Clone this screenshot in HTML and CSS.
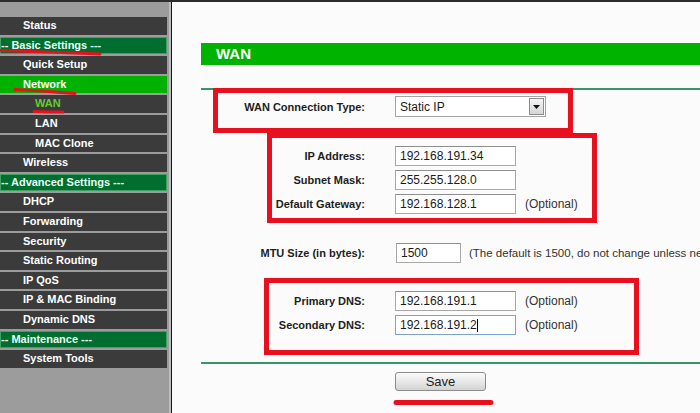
FILE: index.html
```html
<!DOCTYPE html>
<html lang="en">
<head>
    <meta charset="UTF-8">
    <title>WAN</title>
    <link rel="stylesheet" href="styles.css">
</head>
<body>
    <div class="frame">
        <nav class="menu">
            <a class="item">Status</a>
            <div class="section">-- Basic Settings ---</div>
            <a class="item">Quick Setup</a>
            <a class="item active">Network</a>
            <a class="item sub current">WAN</a>
            <a class="item sub">LAN</a>
            <a class="item sub">MAC Clone</a>
            <a class="item">Wireless</a>
            <div class="section">-- Advanced Settings ---</div>
            <a class="item">DHCP</a>
            <a class="item">Forwarding</a>
            <a class="item">Security</a>
            <a class="item">Static Routing</a>
            <a class="item">IP QoS</a>
            <a class="item">IP &amp; MAC Binding</a>
            <a class="item">Dynamic DNS</a>
            <div class="section">-- Maintenance ---</div>
            <a class="item">System Tools</a>
        </nav>

        <main class="content">
            <h1 class="title">WAN</h1>
            <hr class="rule">

            <form class="wan-form">
                <div class="row first">
                    <label>WAN Connection Type:</label>
                    <div class="select">
                        <span>Static IP</span>
                        <span class="arrow">
                            <svg width="7" height="4" viewBox="0 0 7 4"><path d="M0 0h7L3.5 4z" fill="#111"/></svg>
                        </span>
                    </div>
                </div>

                <div class="row spaced">
                    <label>IP Address:</label>
                    <input class="field" value="192.168.191.34">
                </div>
                <div class="row">
                    <label>Subnet Mask:</label>
                    <input class="field" value="255.255.128.0">
                </div>
                <div class="row">
                    <label>Default Gateway:</label>
                    <input class="field" value="192.168.128.1">
                    <span class="hint">(Optional)</span>
                </div>

                <div class="row spaced mtu">
                    <label>MTU Size (in bytes):</label>
                    <input class="field short" value="1500">
                    <span class="hint">(The default is 1500, do not change unless necessary.)</span>
                </div>

                <div class="row dns">
                    <label>Primary DNS:</label>
                    <input class="field" value="192.168.191.1">
                    <span class="hint">(Optional)</span>
                </div>
                <div class="row">
                    <label>Secondary DNS:</label>
                    <span class="focus-wrap">
                        <input class="field focused" value="192.168.191.2">
                        <span class="caret"></span>
                    </span>
                    <span class="hint">(Optional)</span>
                </div>

                <hr class="rule bottom">

                <div class="actions">
                    <button type="button" class="save">Save</button>
                </div>
            </form>
        </main>
    </div>

    <!-- red pen marks drawn over the page -->
    <svg class="marks" width="700" height="413" viewBox="0 0 700 413">
        <g fill="none" stroke="#e8101e" stroke-linecap="round">
            <path d="M0 50.5 Q50 52 100 54" stroke-width="3"/>
            <path d="M15 89.5 Q45 91 75 93.5" stroke-width="3"/>
            <path d="M34 111.5 Q48 112 63 112" stroke-width="3"/>
            <rect x="215.5" y="90.5" width="355" height="40" stroke-width="5" stroke-linecap="butt"/>
            <rect x="269.5" y="135.5" width="325" height="85" stroke-width="5" stroke-linecap="butt"/>
            <rect x="266.5" y="280.5" width="370" height="72" stroke-width="5" stroke-linecap="butt"/>
            <path d="M396 402.5 L491 402.5" stroke-width="5"/>
        </g>
    </svg>
</body>
</html>
```

FILE: styles.css
```css
body {
    margin: 0;
    width: 700px;
    height: 413px;
    overflow: hidden;
    position: relative;
    font-family: "Liberation Sans", Arial, sans-serif;
    background: #fbfbfb;
}

.frame {
    display: flex;
    height: 413px;
    box-sizing: border-box;
    border-top: 2px solid #2c2c2c;
}

/* left menu */
.menu {
    width: 172px;
    flex: none;
    box-sizing: border-box;
    padding-top: 15px;
    background: #9c9c9c;
    border-right: 1px solid #161616;
    box-shadow: inset -2px 0 #bdbdbd;
}

.item,
.section {
    display: block;
    width: 167px;
    height: 17.6px;
    line-height: 17.6px;
    margin-bottom: 2px;
    box-sizing: border-box;
    padding-left: 23px;
    background: #3b3b3b;
    color: #fff;
    font-size: 11px;
    font-weight: bold;
    text-decoration: none;
    white-space: nowrap;
    overflow: hidden;
}

.item.sub {
    padding-left: 35px;
}

.item.current {
    color: #6c3;
}

.item.active {
    background: #00b100;
}

.section {
    padding-left: 0;
    line-height: 15.6px;
    background: #006e2f;
    border: 1px solid #42a067;
    color: #e6fff4;
}

/* main panel */
.content {
    flex: 1;
    min-width: 0;
    padding: 41px 0 0 29px;
    background: #fbfbfb;
    overflow: hidden;
}

.title {
    margin: 0;
    height: 22px;
    line-height: 22px;
    padding-left: 15px;
    background: #00b300;
    color: #fff;
    font-size: 15px;
    font-weight: bold;
}

.rule {
    margin: 23px 0 0;
    border: 0;
    height: 2px;
    background: #35966a;
}

.rule.bottom {
    margin-top: 27px;
}

.row {
    display: flex;
    align-items: center;
    height: 20px;
    margin-top: 4px;
    white-space: nowrap;
}

.row.first {
    height: 21px;
    margin-top: 6px;
}

.row.spaced {
    margin-top: 29px;
}

.row.dns {
    margin-top: 28px;
}

.row label {
    flex: none;
    width: 164px;
    margin-right: 30px;
    text-align: right;
    font-size: 11px;
    font-weight: bold;
    color: #1e1e1e;
}

.field {
    flex: none;
    width: 121px;
    height: 20px;
    box-sizing: border-box;
    margin: 0;
    padding: 0 4px;
    border: 1px solid #a9a9a9;
    border-top-color: #8e8e8e;
    background: #fff;
    font-family: "Liberation Sans", Arial, sans-serif;
    font-size: 12px;
    color: #1a1a1a;
    outline: none;
}

.field.short {
    width: 65px;
    margin-left: 1px;
}

.field.focused {
    border-color: #7da2ce;
}

.focus-wrap {
    position: relative;
    display: flex;
}

.caret {
    position: absolute;
    left: 82px;
    top: 4px;
    width: 1px;
    height: 13px;
    background: #000;
}

.hint {
    margin-left: 9px;
    font-size: 12px;
    color: #333;
}

.mtu .hint {
    margin-left: 8px;
    font-size: 11.5px;
}

.select {
    flex: none;
    width: 151px;
    height: 21px;
    box-sizing: border-box;
    display: flex;
    align-items: center;
    justify-content: space-between;
    padding-left: 4px;
    border: 1px solid #a3a3a3;
    background: #fff;
    font-size: 12px;
    color: #1a1a1a;
}

.select .arrow {
    width: 15px;
    height: 17px;
    margin-right: 1px;
    box-sizing: border-box;
    display: flex;
    align-items: center;
    justify-content: center;
    border: 1px solid #8c8c8c;
    background: linear-gradient(#f5f5f5, #d6d6d6);
}

.actions {
    margin-top: 8px;
    padding-left: 194px;
}

.save {
    width: 91px;
    height: 19px;
    padding: 0;
    border: 1px solid #8b8b8b;
    border-radius: 3px;
    background: linear-gradient(#fbfbfb, #e8e8e8 50%, #d3d3d3);
    font-family: "Liberation Sans", Arial, sans-serif;
    font-size: 13px;
    color: #222;
}

.marks {
    position: absolute;
    top: 0;
    left: 0;
    pointer-events: none;
}
```
